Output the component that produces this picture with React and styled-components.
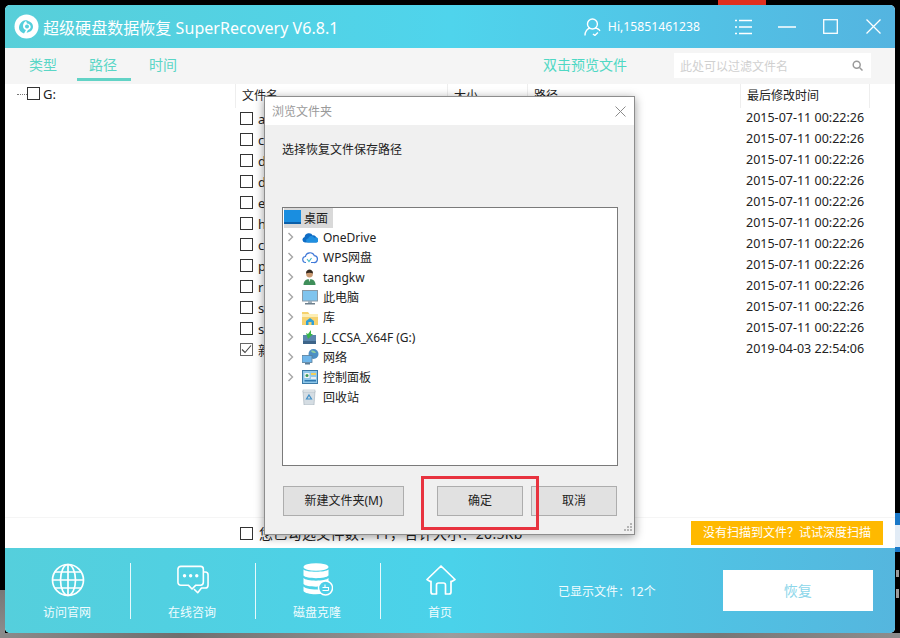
import React from 'react'
import styled, { createGlobalStyle } from 'styled-components'

const GlobalStyle = createGlobalStyle`
    html, body { margin: 0; padding: 0; }
    body {
        width: 900px;
        height: 638px;
        overflow: hidden;
        font-family: "Noto Sans", "Noto Sans CJK SC", sans-serif;
    }
    * { box-sizing: border-box; }
`

const files = [
    ['a', '2015-07-11 00:22:26'],
    ['c', '2015-07-11 00:22:26'],
    ['d', '2015-07-11 00:22:26'],
    ['d', '2015-07-11 00:22:26'],
    ['e', '2015-07-11 00:22:26'],
    ['h', '2015-07-11 00:22:26'],
    ['c', '2015-07-11 00:22:26'],
    ['p', '2015-07-11 00:22:26'],
    ['r', '2015-07-11 00:22:26'],
    ['s', '2015-07-11 00:22:26'],
    ['s', '2015-07-11 00:22:26'],
    ['新', '2019-04-03 22:54:06', true],
]

const Arrow = () => (
    <svg width="8" height="10" viewBox="0 0 8 10" fill="none" stroke="#a6a6a6" strokeWidth="1.4">
        <path d="M1.5 1l4 4-4 4" />
    </svg>
)

const DesktopIcon = () => (
    <svg width="17" height="15" viewBox="0 0 17 15">
        <rect x="0" y="0" width="17" height="14" fill="#1a8ee0" />
        <rect x="0" y="12" width="17" height="2" fill="#0b5fa8" />
    </svg>
)
const OneDriveIcon = () => (
    <svg width="16" height="12" viewBox="0 0 16 12">
        <path d="M3 11.5a2.8 2.8 0 01-.4-5.5 4.4 4.4 0 018.2-1.6 3.5 3.5 0 014 3.4 2 2 0 01-.5 3.7z" fill="#0f6cc4" />
        <path d="M6 11.5a2 2 0 01.2-4 3.2 3.2 0 016-.8 2.4 2.4 0 012.9 4.8z" fill="#1f8fe0" />
    </svg>
)
const WpsIcon = () => (
    <svg width="16" height="14" viewBox="0 0 16 14" fill="none" stroke="#3f78d8" strokeWidth="1.2">
        <path d="M4 12.5a3 3 0 01-.5-6 4.6 4.6 0 018.8-.8 3.4 3.4 0 01-.6 6.8H9" />
        <path d="M5 9l2 2.5L9.500 8" stroke="#45b8c8" />
    </svg>
)
const UserIcon = () => (
    <svg width="15" height="16" viewBox="0 0 15 16">
        <path d="M1.500 16c0-4 2.500-6 6-6s6 2 6 6z" fill="#3f8f5a" />
        <circle cx="7.500" cy="5" r="3.400" fill="#c99a72" />
        <path d="M4 4.500C4 1.500 6 .5 7.500.5S11 1.500 11 4.500C9 3.500 6 3.500 4 4.500z" fill="#33291f" />
        <path d="M6.500 10h2l-1 3z" fill="#eee" />
    </svg>
)
const PcIcon = () => (
    <svg width="16" height="15" viewBox="0 0 16 15">
        <rect x=".5" y=".5" width="15" height="10.500" fill="#7fc4ee" stroke="#8a9aa6" />
        <rect x="6" y="11" width="4" height="2" fill="#9fb0bc" />
        <rect x="3" y="13" width="10" height="1.500" fill="#6d7f8c" />
    </svg>
)
const LibraryIcon = () => (
    <svg width="16" height="15" viewBox="0 0 16 15">
        <path d="M0 2h6l1.500 2H16v11H0z" fill="#f6d26e" />
        <rect x="0" y="4" width="16" height="3" fill="#fdeeb5" />
        <path d="M4 15v-4l4-3 4 3v4H9.500v-3h-3v3z" fill="#2f9fd8" />
    </svg>
)
const DriveIcon = () => (
    <svg width="15" height="14" viewBox="0 0 15 14">
        <rect x="1" y="5" width="13" height="9" fill="#5b86ae" />
        <rect x="1" y="11" width="13" height="3" fill="#3d6488" />
        <path d="M9 0L6 4 4 3l2 6 5-5-2 0z" fill="#39b54a" />
    </svg>
)
const NetworkIcon = () => (
    <svg width="17" height="16" viewBox="0 0 17 16">
        <circle cx="11.500" cy="5" r="5" fill="#4d8fc4" />
        <path d="M9 2c2-1 4 0 5 2-2 0-4 0-5-2z" fill="#8fd0a0" />
        <rect x="0" y="6.500" width="10" height="7" fill="#6fb6ea" stroke="#5a7d98" strokeWidth=".8" />
        <rect x="3" y="14" width="5" height="1.500" fill="#5a7d98" />
    </svg>
)
const PanelIcon = () => (
    <svg width="16" height="14" viewBox="0 0 16 14">
        <rect x=".5" y=".5" width="15" height="13" fill="#8fc8ea" stroke="#3c7ba8" />
        <rect x="2.500" y="3" width="5" height="5" fill="#f3f3f3" />
        <circle cx="5" cy="5.500" r="1.500" fill="#3d9a58" />
        <rect x="9" y="3" width="5" height="2" fill="#f1cf5c" />
        <rect x="9" y="7" width="5" height="2" fill="#e8eef2" />
        <rect x="2.500" y="10" width="11.500" height="1.500" fill="#2f78b0" />
    </svg>
)
const BinIcon = () => (
    <svg width="14" height="16" viewBox="0 0 14 16">
        <path d="M1 2h12l-1 14H2z" fill="#d5dde3" stroke="#a3afb8" strokeWidth=".6" />
        <rect x="1" y="1" width="12" height="2" fill="#eef2f4" stroke="#a3afb8" strokeWidth=".5" />
        <path d="M7 6l2.500 4h-5z" fill="none" stroke="#3f8fc8" strokeWidth="1.200" />
    </svg>
)

const treeItems = [
    ['OneDrive', OneDriveIcon, true],
    ['WPS网盘', WpsIcon, true],
    ['tangkw', UserIcon, true],
    ['此电脑', PcIcon, true],
    ['库', LibraryIcon, true],
    ['J_CCSA_X64F (G:)', DriveIcon, true],
    ['网络', NetworkIcon, true],
    ['控制面板', PanelIcon, true],
    ['回收站', BinIcon, false],
]

const GlobeGlyph = () => (
    <svg width="34" height="34" viewBox="0 0 34 34" fill="none" stroke="#fff" strokeWidth="1.700">
        <circle cx="17" cy="17" r="15.500" />
        <ellipse cx="17" cy="17" rx="7.500" ry="15.500" />
        <path d="M17 1.500v31M1.500 17h31M4 9h26M4 25h26" />
    </svg>
)
const ChatGlyph = () => (
    <svg width="32" height="30" viewBox="0 0 34 31" fill="none" stroke="#fff" strokeWidth="1.700" strokeLinejoin="round">
        <path d="M4 1h21a3 3 0 013 3v14a3 3 0 01-3 3h-5l-4 4-4-4H4a3 3 0 01-3-3V4a3 3 0 013-3z" />
        <path d="M28 7h2a3 3 0 013 3v11a3 3 0 01-3 3h-4l-4 5-4-4" />
        <g fill="#fff" stroke="none">
            <circle cx="8" cy="11" r="1.800" />
            <circle cx="14.500" cy="11" r="1.800" />
            <circle cx="21" cy="11" r="1.800" />
        </g>
    </svg>
)
const DiskGlyph = () => (
    <svg width="30" height="33" viewBox="0 0 30 33">
        <ellipse cx="13" cy="4" rx="12.500" ry="3.800" fill="#fff" />
        <path d="M.5 6.500C3 9.500 23 9.500 25.500 6.500v6C23 16 3 16 .5 12.500z" fill="#fff" />
        <path d="M.5 15C3 18.500 23 18.500 25.500 15v6C23 24.500 3 24.500 .5 21z" fill="#fff" />
        <path d="M.5 23.500C3 27 20 27 22 26l-1 4.500C12 32 2 31 .5 28z" fill="#fff" />
        <circle cx="22.500" cy="25" r="7" fill="#4dcfe8" stroke="#fff" strokeWidth="1.500" />
        <path d="M19.500 27.500h6M19.500 24.500h6v3M22 21.500v3" stroke="#fff" strokeWidth="1.100" fill="none" />
    </svg>
)
const HomeGlyph = () => (
    <svg width="30" height="30" viewBox="0 0 30 30" fill="none" stroke="#fff" strokeWidth="1.700" strokeLinejoin="round" strokeLinecap="round">
        <path d="M1 14.500L15 1l14 13.500-2.800 1.800H25v10.700a2 2 0 01-2 2h-3.500V20a2 2 0 00-2-2h-5a2 2 0 00-2 2v9H7a2 2 0 01-2-2V16.300H3.800z" />
    </svg>
)

const navItems = [
    ['访问官网', GlobeGlyph],
    ['在线咨询', ChatGlyph],
    ['磁盘克隆', DiskGlyph],
    ['首页', HomeGlyph],
]

function App() {
    return (
        <Desktop>
            <GlobalStyle />
            <Window>
                <TitleBar>
                    <svg width="25" height="25" viewBox="0 0 25 25">
                        <circle cx="12.500" cy="12.500" r="12" fill="#fff" />
                        <path d="M5 14c0-5 4-8.500 9-8 -3 1-5 3-5 6 0 2 1 3.500 3 4l-2 3.500C7 18.500 5 16.500 5 14z" fill="#55cfdc" />
                        <path d="M12 6.800c4 0 7 2.400 7 5.900 0 3.300-3 5.800-6.500 5.800l1.500-2.600c1.500-.3 2.700-1.600 2.700-3.200 0-2-1.700-3.300-3.700-3.300z" fill="#55cfdc" />
                        <circle cx="13" cy="12.500" r="2" fill="#55cfdc" />
                    </svg>
                    <AppTitle>超级硬盘数据恢复 SuperRecovery V6.8.1</AppTitle>
                    <Account>
                        <svg width="17" height="18" viewBox="0 0 17 18" fill="none" stroke="#fff" strokeWidth="1.400">
                            <circle cx="8.500" cy="6" r="5" />
                            <path d="M1 17.500c0-4 2.500-7 5-7.500M16 13c-.5-1.500-1.500-2.500-5-3M9 16l2 1.500 3-3" />
                        </svg>
                        <AccountName>Hi,15851461238</AccountName>
                    </Account>
                    <WindowControls>
                        <svg width="17" height="16" viewBox="0 0 17 16" stroke="#fff" strokeWidth="1.400">
                            <path d="M4 1.500h13M4 8h13M4 14.500h13M0 1.500h2M0 8h2M0 14.500h2" />
                        </svg>
                        <svg width="18" height="16" viewBox="0 0 18 16" stroke="#fff" strokeWidth="1.600">
                            <path d="M0 8h18" />
                        </svg>
                        <svg width="15" height="15" viewBox="0 0 15 15" fill="none" stroke="#fff" strokeWidth="1.300">
                            <rect x=".7" y=".7" width="13.600" height="13.600" />
                        </svg>
                        <svg width="15" height="15" viewBox="0 0 15 15" stroke="#fff" strokeWidth="1.300">
                            <path d="M.5.5l14 14M14.500.5l-14 14" />
                        </svg>
                    </WindowControls>
                </TitleBar>

                <TabBar>
                    <Tab>类型</Tab>
                    <Tab $active>路径</Tab>
                    <Tab>时间</Tab>
                    <PreviewHint>双击预览文件</PreviewHint>
                    <SearchBox>
                        <span>此处可以过滤文件名</span>
                        <svg width="11" height="11" viewBox="0 0 11 11" fill="none" stroke="#9a9a9a" strokeWidth="1.500">
                            <circle cx="4.700" cy="4.700" r="3.500" />
                            <path d="M7.500 7.500l3 3" />
                        </svg>
                    </SearchBox>
                </TabBar>

                <Content>
                    <TreePane>
                        <DotLine />
                        <Check />
                        <DriveLabel>G:</DriveLabel>
                    </TreePane>
                    <FilePane>
                        <HeaderRow>
                            <HeaderCell>文件名</HeaderCell>
                            <HeaderCell>大小</HeaderCell>
                            <HeaderCell>路径</HeaderCell>
                            <HeaderCell>最后修改时间</HeaderCell>
                        </HeaderRow>
                        {files.map(([name, time, checked], i) => (
                            <FileRow key={i}>
                                <NameCell>
                                    <Check $checked={checked}>
                                        {checked && (
                                            <svg width="11" height="11" viewBox="0 0 11 11" fill="none" stroke="#444" strokeWidth="1.100">
                                                <path d="M1 5.500l3 3 6-7" />
                                            </svg>
                                        )}
                                    </Check>
                                    <span>{name}</span>
                                </NameCell>
                                <span />
                                <span />
                                <TimeCell>{time}</TimeCell>
                            </FileRow>
                        ))}
                    </FilePane>
                </Content>

                <StatusRow>
                    <Check />
                    <StatusText>您已勾选文件数：11，合计大小：20.5Kb</StatusText>
                    <DeepScan>没有扫描到文件？试试深度扫描</DeepScan>
                </StatusRow>

                <Footer>
                    {navItems.map(([label, Glyph]) => (
                        <NavItem key={label}>
                            <NavIcon><Glyph /></NavIcon>
                            <NavLabel>{label}</NavLabel>
                        </NavItem>
                    ))}
                    <ShownCount>已显示文件：12个</ShownCount>
                    <RestoreButton>恢复</RestoreButton>
                </Footer>

                <Dialog>
                    <DialogTitle>
                        <span>浏览文件夹</span>
                        <svg width="11" height="11" viewBox="0 0 11 11" stroke="#8c8c8c" strokeWidth="1">
                            <path d="M.5.5l10 10M10.500.5l-10 10" />
                        </svg>
                    </DialogTitle>
                    <DialogBody>
                        <DialogPrompt>选择恢复文件保存路径</DialogPrompt>
                        <FolderTree>
                            <RootRow>
                                <DesktopIcon />
                                <RootLabel>桌面</RootLabel>
                            </RootRow>
                            {treeItems.map(([label, Icon, expandable]) => (
                                <TreeRow key={label}>
                                    <Chevron>{expandable && <Arrow />}</Chevron>
                                    <TreeIcon><Icon /></TreeIcon>
                                    <span>{label}</span>
                                </TreeRow>
                            ))}
                        </FolderTree>
                        <DialogButtons>
                            <DialogButton $wide>新建文件夹(M)</DialogButton>
                            <DialogButton>确定</DialogButton>
                            <DialogButton>取消</DialogButton>
                        </DialogButtons>
                    </DialogBody>
                    <Grip>
                        <svg width="8" height="8" viewBox="0 0 8 8" fill="#b5b5b5">
                            <path d="M6 0h2v2H6zM3 3h2v2H3zM6 3h2v2H6zM0 6h2v2H0zM3 6h2v2H3zM6 6h2v2H6z" />
                        </svg>
                    </Grip>
                    <RedMark />
                </Dialog>
            </Window>
        </Desktop>
    )
}

const Desktop = styled.div`
    width: 900px;
    height: 638px;
    padding: 5px;
    overflow: hidden;
    background:
        linear-gradient(#e0301e, #e0301e) 718px 0 / 48px 5px no-repeat,
        linear-gradient(#e2ecf6, #e2ecf6) 895px 525px / 5px 22px no-repeat,
        linear-gradient(#1a78c8, #1a78c8) 895px 513px / 5px 39px no-repeat,
        linear-gradient(#9a9a9a, #9a9a9a) 896px 570px / 3px 7px no-repeat,
        linear-gradient(#9a9a9a, #9a9a9a) 896px 589px / 3px 9px no-repeat,
        linear-gradient(90deg, #8a8a8a, #6f6f6f 20%, #9c9c9c 50%, #777 80%, #8d8d8d) 0 633px / 900px 5px no-repeat,
        linear-gradient(#777, #8e8e8e) 0 590px / 5px 48px no-repeat,
        #000;
`

const Window = styled.div`
    position: relative;
    width: 890px;
    height: 628px;
    display: flex;
    flex-direction: column;
    background: #fff;
    border-radius: 5px;
    overflow: hidden;
`

const TitleBar = styled.div`
    height: 43px;
    flex: none;
    display: flex;
    align-items: center;
    padding-left: 9px;
    background: linear-gradient(90deg, #58cfd9 0%, #4fd4ec 50%, #54b4e0 100%);
    color: #fff;
`

const AppTitle = styled.div`
    width: 296px;
    flex: none;
    margin-left: 4px;
    font-size: 16px;
    letter-spacing: 0.05px;
    white-space: nowrap;
`

const Account = styled.div`
    width: 116px;
    flex: none;
    margin-left: 245px;
    display: flex;
    align-items: center;
    gap: 7px;
`

const AccountName = styled.span`
    font-size: 12.200px;
    white-space: nowrap;
`

const WindowControls = styled.div`
    margin-left: 35px;
    display: flex;
    align-items: center;
    gap: 26px;
    svg:nth-child(3) { margin-left: 1px; }
    svg:last-child { margin-left: 2px; }
`

const TabBar = styled.div`
    height: 36px;
    flex: none;
    display: flex;
    align-items: flex-start;
    gap: 6px;
    padding-left: 12px;
    background: #f5f5f5;
`

const Tab = styled.div`
    width: 54px;
    height: 33px;
    padding: 3px 2px 0 0;
    line-height: 28px;
    text-align: center;
    font-size: 14px;
    color: #5ad6c6;
    border-bottom: 3px solid ${p => (p.$active ? '#62d3c6' : 'transparent')};
`

const PreviewHint = styled.div`
    margin-left: 346px;
    line-height: 34px;
    font-size: 14px;
    color: #4fd8c4;
`

const SearchBox = styled.div`
    margin: 5px 0 0 41px;
    width: 197px;
    height: 25px;
    display: flex;
    align-items: center;
    justify-content: space-between;
    padding: 0 8px 0 6px;
    background: #fff;
    font-size: 12px;
    color: #d0d0d0;
`

const Content = styled.div`
    flex: 1;
    min-height: 0;
    display: flex;
`

const TreePane = styled.div`
    width: 230px;
    flex: none;
    display: flex;
    align-items: flex-start;
    padding: 3px 0 0 12px;
`

const DotLine = styled.div`
    width: 10px;
    margin-top: 7px;
    border-top: 1px dotted #777;
`

const Check = styled.div`
    width: 13px;
    height: 13px;
    flex: none;
    display: flex;
    align-items: center;
    justify-content: center;
    background: #fff;
    border: 1px solid #333;
    ${p => p.$checked && 'border-color: #666;'}
`

const DriveLabel = styled.span`
    margin-left: 3px;
    font-size: 13px;
    line-height: 14px;
    color: #222;
`

const FilePane = styled.div`
    flex: 1;
    display: flex;
    flex-direction: column;
`

const HeaderRow = styled.div`
    height: 24px;
    flex: none;
    display: grid;
    grid-template-columns: 212px 80px 213px 130px;
`

const HeaderCell = styled.div`
    padding-left: 6px;
    font-size: 12px;
    line-height: 23px;
    color: #222;
    border-left: 1px solid #eee;
    &:last-child { border-right: 1px solid #eee; }
`

const FileRow = styled.div`
    height: 21px;
    flex: none;
    display: grid;
    grid-template-columns: 212px 80px 213px 130px;
    align-items: center;
`

const NameCell = styled.div`
    display: flex;
    align-items: center;
    gap: 5px;
    padding-left: 5px;
    font-size: 13px;
    color: #222;
`

const TimeCell = styled.div`
    padding: 0 0 2px 6px;
    font-size: 12.500px;
    color: #222;
    white-space: nowrap;
`

const StatusRow = styled.div`
    height: 31px;
    flex: none;
    display: flex;
    align-items: center;
    padding: 0 12px 0 235px;
    border-top: 1px solid #f5f5f5;
`

const StatusText = styled.span`
    margin-left: 6px;
    font-size: 14px;
    letter-spacing: 0.3px;
    color: #222;
    white-space: nowrap;
`

const DeepScan = styled.div`
    margin-left: auto;
    width: 192px;
    height: 24px;
    line-height: 24px;
    text-align: center;
    font-size: 12px;
    color: #fff;
    background: #ffb900;
`

const Footer = styled.div`
    height: 85px;
    flex: none;
    display: flex;
    align-items: center;
    padding-left: 1px;
    background: linear-gradient(90deg, #55cfdc 0%, #4ad2ea 50%, #55b6de 100%);
    color: #fff;
`

const NavItem = styled.div`
    width: 125px;
    height: 56px;
    flex: none;
    display: flex;
    flex-direction: column;
    align-items: center;
    border-right: 1px solid #e6f9fc;
    &:nth-child(4) {
        width: 120px;
        border-right: 0;
    }
`

const NavIcon = styled.div`
    height: 34px;
    flex: none;
    display: flex;
    align-items: center;
    justify-content: center;
`

const NavLabel = styled.div`
    flex: none;
    margin-top: 8px;
    padding-right: 2px;
    font-size: 12px;
    line-height: 16px;
    color: #f2fcfe;
`

const ShownCount = styled.div`
    margin-left: 57px;
    font-size: 12px;
    white-space: nowrap;
    color: #f2fcfe;
`

const RestoreButton = styled.div`
    margin-left: 67px;
    width: 150px;
    height: 41px;
    line-height: 41px;
    text-align: center;
    font-size: 14px;
    color: #8cd6ea;
    background: #fff;
`

const Dialog = styled.div`
    position: absolute;
    left: 259px;
    top: 91px;
    width: 371px;
    height: 439px;
    display: flex;
    flex-direction: column;
    background: #f0f0f0;
    border: 1px solid #8d8d8d;
    box-shadow: 0 2px 9px rgba(0, 0, 0, 0.4);
`

const DialogTitle = styled.div`
    height: 28px;
    flex: none;
    display: flex;
    align-items: center;
    justify-content: space-between;
    padding: 0 8px 0 7px;
    background: #fff;
    font-size: 12px;
    color: #9a9a9a;
`

const DialogBody = styled.div`
    flex: 1;
    display: flex;
    flex-direction: column;
    padding: 16px 17px 0;
`

const DialogPrompt = styled.div`
    font-size: 12px;
    line-height: 18px;
    color: #222;
    height: 66px;
`

const FolderTree = styled.div`
    width: 336px;
    height: 259px;
    flex: none;
    padding: 0 1px;
    background: #fff;
    border: 1px solid #7a7a7a;
`

const RootRow = styled.div`
    width: 49px;
    height: 20px;
    display: flex;
    align-items: center;
    padding-bottom: 1px;
    background: #d9d9d9;
    font-size: 12px;
    color: #222;
`

const RootLabel = styled.span`
    margin-left: 3px;
`

const TreeRow = styled.div`
    height: 20px;
    display: flex;
    align-items: center;
    padding-bottom: 2px;
    font-size: 12px;
    color: #222;
`

const Chevron = styled.span`
    width: 18px;
    flex: none;
    display: flex;
    justify-content: flex-start;
    padding-left: 3px;
`

const TreeIcon = styled.span`
    width: 21px;
    flex: none;
    display: flex;
    align-items: center;
    justify-content: flex-start;
`

const DialogButtons = styled.div`
    margin-top: 20px;
    padding-left: 1px;
    display: flex;
`

const DialogButton = styled.div`
    width: ${p => (p.$wide ? '121px' : '86px')};
    height: 30px;
    line-height: 28px;
    text-align: center;
    font-size: 12px;
    color: #222;
    background: #e1e1e1;
    border: 1px solid #adadad;
    &:nth-child(2) { margin-left: 33px; }
    &:nth-child(3) { margin-left: 8px; }
`

const Grip = styled.div`
    position: absolute;
    right: 2px;
    bottom: 3px;
    line-height: 0;
`

const RedMark = styled.div`
    position: absolute;
    left: 156px;
    top: 379px;
    width: 118px;
    height: 54px;
    border: 3px solid #e8333f;
`

export default App
